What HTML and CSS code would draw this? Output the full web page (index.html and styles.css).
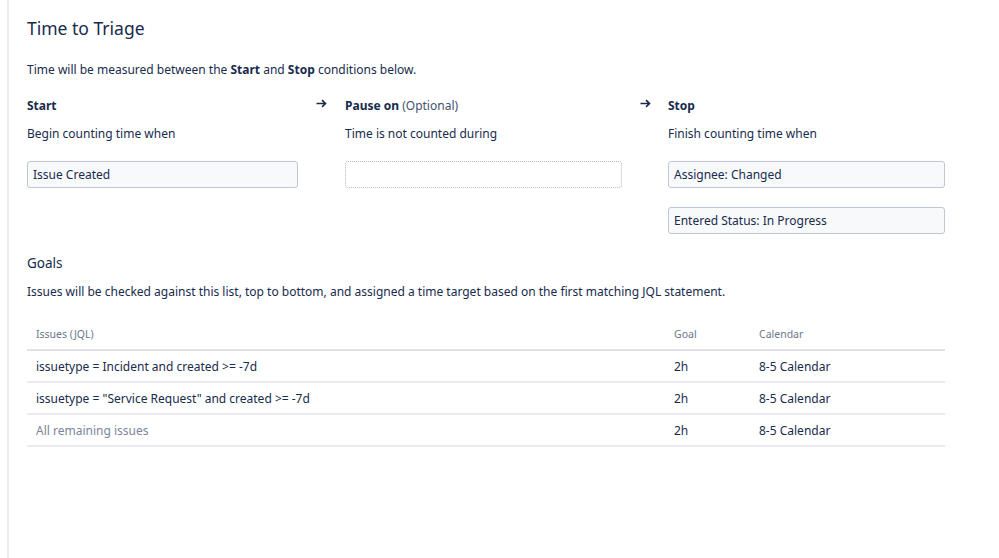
FILE: index.html
```html
<!DOCTYPE html>
<html>
<head>
<meta charset="utf-8">
<link rel="stylesheet" href="styles.css">
</head>
<body>
<div class="panel">
  <h1 class="title">Time to Triage</h1>
  <p class="intro">Time will be measured between the <b>Start</b> and <b>Stop</b> conditions below.</p>

  <div class="conditions">
    <div class="col">
      <div class="col-head"><b>Start</b></div>
      <div class="col-sub">Begin counting time when</div>
      <div class="field">Issue Created</div>
    </div>
    <div class="arrow"><svg width="11" height="9" viewBox="0 0 11 9"><path d="M0.5 4.5H9M6 1.2L9.5 4.5L6 7.8" fill="none" stroke="#172b4d" stroke-width="1.6"/></svg></div>
    <div class="col">
      <div class="col-head"><b>Pause on</b> <span class="opt">(Optional)</span></div>
      <div class="col-sub">Time is not counted during</div>
      <div class="field empty"></div>
    </div>
    <div class="arrow"><svg width="11" height="9" viewBox="0 0 11 9"><path d="M0.5 4.5H9M6 1.2L9.5 4.5L6 7.8" fill="none" stroke="#172b4d" stroke-width="1.6"/></svg></div>
    <div class="col">
      <div class="col-head"><b>Stop</b></div>
      <div class="col-sub">Finish counting time when</div>
      <div class="field">Assignee: Changed</div>
      <div class="field">Entered Status: In Progress</div>
    </div>
  </div>

  <h2 class="goals-title">Goals</h2>
  <p class="goals-desc">Issues will be checked against this list, top to bottom, and assigned a time target based on the first matching JQL statement.</p>

  <table class="goals">
    <thead>
      <tr><th class="c-jql">Issues (JQL)</th><th class="c-goal">Goal</th><th class="c-cal">Calendar</th></tr>
    </thead>
    <tbody>
      <tr><td>issuetype = Incident and created &gt;= -7d</td><td>2h</td><td>8-5 Calendar</td></tr>
      <tr><td>issuetype = "Service Request" and created &gt;= -7d</td><td>2h</td><td>8-5 Calendar</td></tr>
      <tr><td class="muted">All remaining issues</td><td>2h</td><td>8-5 Calendar</td></tr>
    </tbody>
  </table>
</div>
</body>
</html>
```
FILE: styles.css
```css
html, body {
  margin: 0;
  padding: 0;
  background: #fff;
  height: 100%;
}
body {
  font-family: "Noto Sans", "Open Sans", sans-serif;
  font-size: 12px;
  color: #172b4d;
  padding-left: 7px;
  box-sizing: border-box;
}
.panel {
  border-left: 2px solid #ebecf0;
  min-height: 100%;
  padding: 14px 0 0 18px;
  box-sizing: border-box;
}
.title {
  margin: 0;
  font-size: 17.5px;
  font-weight: 400;
  line-height: 28px;
}
.intro {
  margin: 19px 0 0;
  line-height: 18px;
}
b { font-weight: 700; }
.conditions {
  display: grid;
  grid-template-columns: 271px 47px 277px 46px 277px;
  margin-top: 18px;
  align-items: start;
}
.col-head {
  line-height: 18px;
}
.opt { color: #42526e; }
.col-sub {
  margin-top: 10px;
  line-height: 18px;
}
.arrow {
  padding-left: 18px;
  height: 18px;
  display: flex;
  align-items: center;
  margin-top: -3px;
}
.field {
  margin-top: 18px;
  height: 27px;
  box-sizing: border-box;
  border: 1px solid #c1c7d0;
  border-radius: 3px;
  background: #f8f9fb;
  padding: 0 5px;
  line-height: 25px;
}
.field + .field { margin-top: 19px; }
.field.empty {
  background: #fff;
  border: 1px dotted #b3bac5;
}
.goals-title {
  margin: 18px 0 0;
  font-size: 13.5px;
  font-weight: 400;
  line-height: 22px;
}
.goals-desc {
  margin: 9px 0 0;
  line-height: 18px;
}
.goals {
  margin-top: 18px;
  width: 918px;
  border-collapse: collapse;
  table-layout: fixed;
}
.goals th {
  font-size: 10.5px;
  font-weight: 400;
  color: #6b778c;
  text-align: left;
  padding: 0 0 0 9px;
  height: 30px;
  vertical-align: middle;
  border-bottom: 2px solid #dfe1e6;
}
.goals td {
  height: 30px;
  padding: 0 0 0 9px;
  border-bottom: 2px solid #ebecf0;
  vertical-align: middle;
}
.goals th.c-jql { width: 638px; }
.goals th.c-goal { width: 85px; padding-left: 0; }
.goals th.c-cal { padding-left: 0; }
.goals td:nth-child(2), .goals td:nth-child(3) { padding-left: 0; }
.muted { color: #7a869a; }
```
